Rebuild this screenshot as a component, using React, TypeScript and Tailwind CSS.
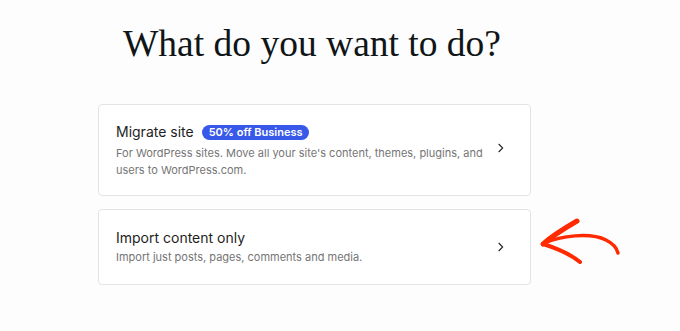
import React from "react";

function Chevron() {
  return (
    <svg width="16" height="16" viewBox="0 0 24 24" fill="none" className="shrink-0">
      <path d="M10 6l6 6-6 6" stroke="#1e1e1e" strokeWidth="1.6" />
    </svg>
  );
}

export default function App() {
  return (
    <div className="relative w-[680px] h-[331px] bg-[#fdfdfd] overflow-hidden" style={{ fontFamily: "Inter, 'Noto Sans', sans-serif" }}>
      <div className="ml-[98px] w-[433px] flex flex-col items-center">
        <h1 className="mt-[21px] mr-[5px] whitespace-nowrap text-[37.5px] leading-[46px] text-[#101517]" style={{ fontFamily: "'Liberation Serif', serif" }}>
          What do you want to do?
        </h1>
        <div className="mt-[37px] w-full flex flex-col gap-[13px]">
          <div className="flex items-center justify-between bg-white border border-[#e2e4e7] rounded-[4px] pl-[17px] pr-[22px] pt-[17px] pb-[16px]">
            <div className="flex flex-col">
              <div className="flex items-center gap-[8px]">
                <span className="text-[14px] leading-[20px] text-[#1e1e1e]">Migrate site</span>
                <span className="bg-[#3858e9] text-white text-[11px] leading-[15px] font-semibold rounded-full px-[7px]">50% off Business</span>
              </div>
              <p className="mt-[3px] text-[11px] leading-[17px] text-[#757575] w-[370px]">
                For WordPress sites. Move all your site's content, themes, plugins, and users to WordPress.com.
              </p>
            </div>
            <div className="mb-[6px]">
              <Chevron />
            </div>
          </div>
          <div className="flex items-center justify-between bg-white border border-[#e2e4e7] rounded-[4px] pl-[17px] pr-[22px] pt-[18px] pb-[18px]">
            <div className="flex flex-col">
              <span className="text-[14px] leading-[20px] text-[#1e1e1e]">Import content only</span>
              <p className="mt-[1px] text-[11px] leading-[17px] text-[#757575]">
                Import just posts, pages, comments and media.
              </p>
            </div>
            <Chevron />
          </div>
        </div>
      </div>
      <svg className="absolute left-0 top-0" width="680" height="331" viewBox="0 0 680 331" fill="none">
        <path d="M577 221 C 565 228, 552 236, 543 244" stroke="#ff2a00" strokeWidth="5" strokeLinecap="round" />
        <path d="M543 244 C 556 248, 570 254, 580 262" stroke="#ff2a00" strokeWidth="4" strokeLinecap="round" />
        <path d="M545 243 C 560 236, 590 232, 606 240 C 614 244, 617 249, 618 253" stroke="#ff2a00" strokeWidth="3.5" strokeLinecap="round" />
      </svg>
    </div>
  );
}
